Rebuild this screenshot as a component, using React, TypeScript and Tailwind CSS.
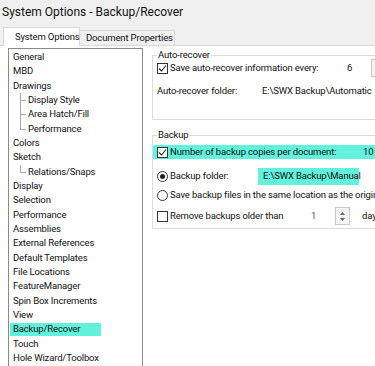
const tree: { label: string; child?: boolean; last?: boolean; selected?: boolean }[] = [
  { label: 'General' },
  { label: 'MBD' },
  { label: 'Drawings' },
  { label: 'Display Style', child: true },
  { label: 'Area Hatch/Fill', child: true },
  { label: 'Performance', child: true, last: true },
  { label: 'Colors' },
  { label: 'Sketch' },
  { label: 'Relations/Snaps', child: true, last: true },
  { label: 'Display' },
  { label: 'Selection' },
  { label: 'Performance' },
  { label: 'Assemblies' },
  { label: 'External References' },
  { label: 'Default Templates' },
  { label: 'File Locations' },
  { label: 'FeatureManager' },
  { label: 'Spin Box Increments' },
  { label: 'View' },
  { label: 'Backup/Recover', selected: true },
  { label: 'Touch' },
  { label: 'Hole Wizard/Toolbox' },
];

function Check({ checked }: { checked?: boolean }) {
  return (
    <span className="w-[11px] h-[11px] border border-[#333] bg-white flex items-center justify-center shrink-0">
      {checked && (
        <svg width="9" height="9" viewBox="0 0 9 9">
          <path d="M1 4.5 L3.5 7 L8 1.5" fill="none" stroke="#222" strokeWidth="1.1" />
        </svg>
      )}
    </span>
  );
}

function Radio({ checked }: { checked?: boolean }) {
  return (
    <span className="w-[11px] h-[11px] rounded-full border border-[#333] bg-white flex items-center justify-center shrink-0">
      {checked && <span className="w-[5px] h-[5px] rounded-full bg-[#222]" />}
    </span>
  );
}

function Spin() {
  return (
    <span className="w-[15px] h-[18px] border border-[#c8c8c8] bg-[#f4f4f4] flex flex-col items-center justify-center gap-[3px] shrink-0">
      <svg width="5" height="3" viewBox="0 0 5 3">
        <path d="M0 3 L2.5 0 L5 3 Z" fill="#666" />
      </svg>
      <svg width="5" height="3" viewBox="0 0 5 3">
        <path d="M0 0 L2.5 3 L5 0 Z" fill="#666" />
      </svg>
    </span>
  );
}

export default function App() {
  return (
    <div
      className="w-[375px] h-[366px] overflow-hidden bg-[#f0f0f0] text-[#111] flex flex-col"
      style={{ fontFamily: 'Roboto, "Liberation Sans", sans-serif' }}
    >
      <div className="h-[24px] shrink-0 pl-[2px] flex items-center text-[12px] whitespace-nowrap">
        System Options - Backup/Recover
      </div>

      <div className="h-[21px] shrink-0 flex items-end pl-[3px] text-[9.5px] tracking-[-0.15px] whitespace-nowrap">
        <div className="h-[19px] w-[77px] pl-[11px] bg-white border border-b-0 border-[#d9d9d9] flex items-center relative top-[1px]">
          System Options
        </div>
        <div className="h-[15px] w-[95px] pl-[6px] bg-[#f0f0f0] border border-l-0 border-b-0 border-[#d9d9d9] flex items-center">
          Document Properties
        </div>
      </div>

      <div className="flex-1 min-h-0 bg-white border-t border-[#d9d9d9] flex text-[9.5px] tracking-[-0.15px] whitespace-nowrap">
        <div className="pl-[8px] pt-[2px] shrink-0">
          <div className="w-[135px] h-[330px] border border-[#8a8a8a] pt-[1px]">
            {tree.map((item, i) => (
              <div key={i} className="h-[14.33px] flex items-center">
                {item.child ? (
                  <span className="w-[16px] h-full relative shrink-0">
                    <span
                      className={`absolute left-[11px] top-0 w-px bg-[#a8a8a8] ${item.last ? 'h-1/2' : 'h-full'}`}
                    />
                    <span className="absolute left-[11px] top-1/2 w-[6px] h-px bg-[#a8a8a8]" />
                  </span>
                ) : null}
                <span
                  className={`${item.child ? '' : 'ml-[1px]'} pl-[3px] flex items-center ${
                    item.selected ? 'bg-[#62f2dc] h-[13px] pr-[21px]' : 'h-[15px] pr-[4px]'
                  }`}
                >
                  {item.label}
                </span>
              </div>
            ))}
          </div>
        </div>

        <div className="pl-[9px] flex flex-col">
          <fieldset className="w-[250px] h-[71px] mt-[3px] border border-[#dcdcdc] pl-[4px]">
            <legend className="px-[1px] leading-[12px]">Auto-recover</legend>
            <div className="flex items-center h-[14px]">
              <Check checked />
              <span className="ml-[2px] w-[177px]">Save auto-recover information every:</span>
              <span>6</span>
              <span className="ml-[19px] w-[15px] h-[18px] border border-[#c8c8c8] bg-[#f4f4f4] shrink-0" />
            </div>
            <div className="flex items-center h-[14px] mt-[9px]">
              <span className="w-[105px] shrink-0">Auto-recover folder:</span>
              <span>E:\SWX Backup\Automatic</span>
            </div>
          </fieldset>

          <fieldset className="w-[250px] h-[100px] mt-[9px] border border-[#dcdcdc]">
            <legend className="ml-[4px] px-[1px] leading-[12px]">Backup</legend>
            <div className="flex items-center h-[14px] mt-[4px] pl-[4px] bg-[#62f2dc]">
              <Check checked />
              <span className="ml-[2px] w-[193px] shrink-0">Number of backup copies per document:</span>
              <span>10</span>
            </div>
            <div className="flex items-center h-[17px] mt-[9px] pl-[4px]">
              <Radio checked />
              <span className="ml-[2px] w-[88px] shrink-0">Backup folder:</span>
              <span className="h-[17px] w-[101px] shrink-0 bg-[#62f2dc] flex items-center pl-[5px]">E:\SWX Backup\Manual</span>
            </div>
            <div className="flex items-center h-[14px] mt-[3px] pl-[4px]">
              <Radio />
              <span className="ml-[2px]">Save backup files in the same location as the original</span>
            </div>
            <div className="flex items-center h-[18px] mt-[5px] pl-[4px]">
              <Check />
              <span className="ml-[2px] w-[141px] shrink-0">Remove backups older than</span>
              <span className="w-[24px] shrink-0 text-[#555]">1</span>
              <Spin />
              <span className="ml-[12px]">days</span>
            </div>
          </fieldset>
        </div>
      </div>
    </div>
  );
}
